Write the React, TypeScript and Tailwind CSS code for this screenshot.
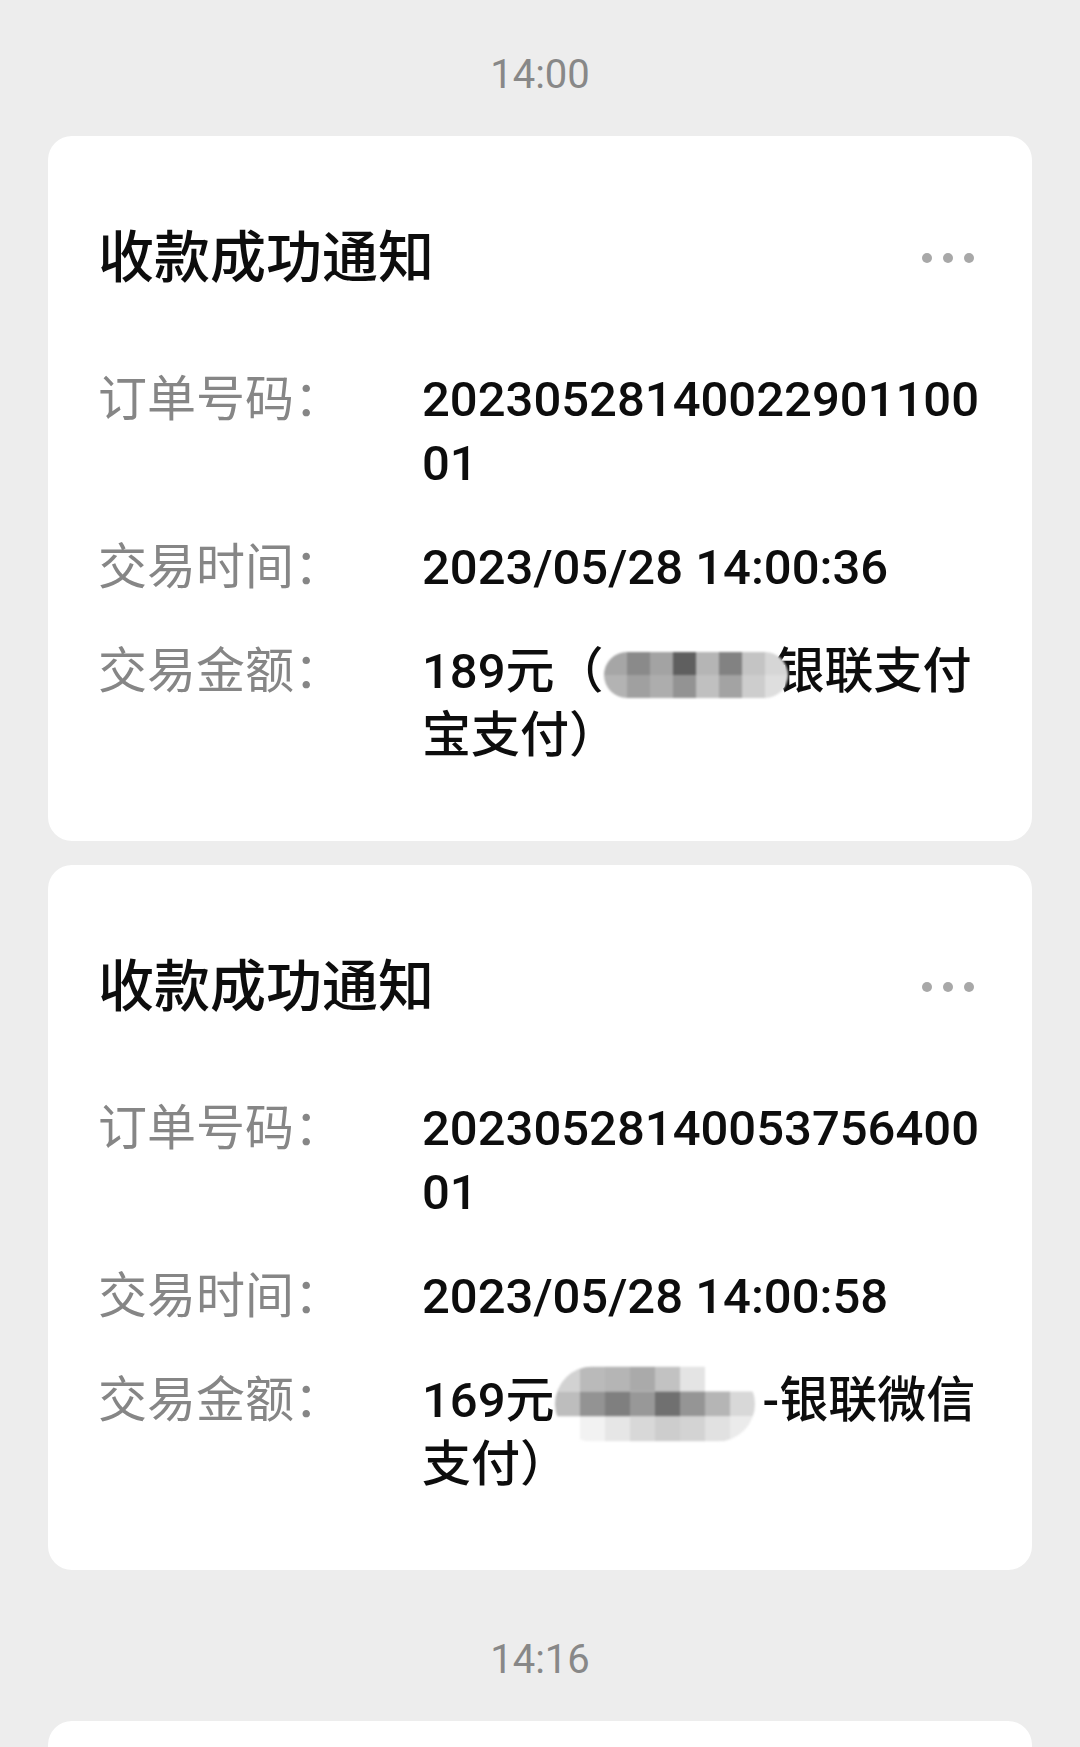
import React from 'react';

interface Row {
  label: string;
  value: React.ReactNode;
}

interface Notice {
  title: string;
  rows: Row[];
}

const mosaicA = [
  ['#a6a6a6', '#8a8a8a', '#a3a3a3', '#5f5f5f', '#b5b5b5', '#828282', '#c4c4c4', '#d6d6d6'],
  ['#b3b3b3', '#a0a0a0', '#adadad', '#939393', '#c0c0c0', '#a3a3a3', '#cdcdcd', '#dedede'],
];

const mosaicB = [
  ['#d2d2d2', '#bababa', '#b5b5b5', '#aaaaaa', '#c2c2c2', '#e4e4e4', '#ffffff', '#ffffff'],
  ['#bdbdbd', '#939393', '#7f7f7f', '#989898', '#707070', '#959595', '#b5b5b5', '#d8d8d8'],
  ['#ffffff', '#f2f2f2', '#e6e6e6', '#d8d8d8', '#cdcdcd', '#d3d3d3', '#e1e1e1', '#ebebeb'],
];

// pixelated patch drawn over the hidden part of the text
const Mosaic: React.FC<{ grid: string[][]; width: number; cell: number }> = ({ grid, width, cell }) => (
  <span className="relative inline-block align-middle h-[1em]" style={{ width }}>
    <span className="absolute left-0 top-1/2 -translate-y-1/2 flex flex-col overflow-hidden rounded-full blur-[1px]">
      {grid.map((row, i) => (
        <span key={i} className="flex">
          {row.map((c, j) => (
            <span key={j} className="block" style={{ width: cell, height: cell, background: c }} />
          ))}
        </span>
      ))}
    </span>
  </span>
);

const notices: Notice[] = [
  {
    title: '收款成功通知',
    rows: [
      { label: '订单号码：', value: '2023052814002290110001' },
      { label: '交易时间：', value: '2023/05/28 14:00:36' },
      {
        label: '交易金额：',
        value: (
          <>
            189元（
            <Mosaic grid={mosaicA} width={172} cell={23} />
            银联支付宝支付）
          </>
        ),
      },
    ],
  },
  {
    title: '收款成功通知',
    rows: [
      { label: '订单号码：', value: '2023052814005375640001' },
      { label: '交易时间：', value: '2023/05/28 14:00:58' },
      {
        label: '交易金额：',
        value: (
          <>
            169元
            <Mosaic grid={mosaicB} width={208} cell={25} />
            -银联微信支付）
          </>
        ),
      },
    ],
  },
];

const font = { fontFamily: 'Roboto, "Noto Sans CJK SC", sans-serif' };

const Dots = () => (
  <div className="flex items-center gap-[11px] mr-[8px]">
    <span className="w-[10px] h-[10px] rounded-full bg-[#a8a8a8]" />
    <span className="w-[10px] h-[10px] rounded-full bg-[#a8a8a8]" />
    <span className="w-[10px] h-[10px] rounded-full bg-[#a8a8a8]" />
  </div>
);

const NoticeCard: React.FC<{ notice: Notice }> = ({ notice }) => (
  <div className="bg-white rounded-[24px] pt-[90px] pb-[73px] px-[50px]">
    <div className="flex items-center justify-between">
      <h2 className="text-[56px] leading-[64px] font-medium text-[#0d0d0d]">{notice.title}</h2>
      <Dots />
    </div>
    <div className="mt-[78px] flex flex-col gap-[40px]">
      {notice.rows.map((r, i) => (
        <div key={i} className="flex text-[49px] leading-[64px]">
          <div className="w-[324px] shrink-0 text-[#868686]">{r.label}</div>
          <div className="flex-1 min-w-0 break-all text-[#0d0d0d] font-medium">{r.value}</div>
        </div>
      ))}
    </div>
  </div>
);

const TimeStamp: React.FC<{ time: string }> = ({ time }) => (
  <div className="h-[50px] leading-[50px] text-center text-[40px] text-[#888888] mb-[36px]">{time}</div>
);

export default function App() {
  return (
    <div className="w-[1080px] h-[1747px] overflow-hidden bg-[#ededed] pt-[50px]" style={font}>
      <TimeStamp time="14:00" />
      <div className="mx-[48px] flex flex-col gap-[24px]">
        {notices.map((n, i) => (
          <NoticeCard key={i} notice={n} />
        ))}
      </div>
      <div className="mt-[65px]">
        <TimeStamp time="14:16" />
      </div>
      <div className="mx-[48px] bg-white rounded-[24px] h-[300px]" />
    </div>
  );
}
